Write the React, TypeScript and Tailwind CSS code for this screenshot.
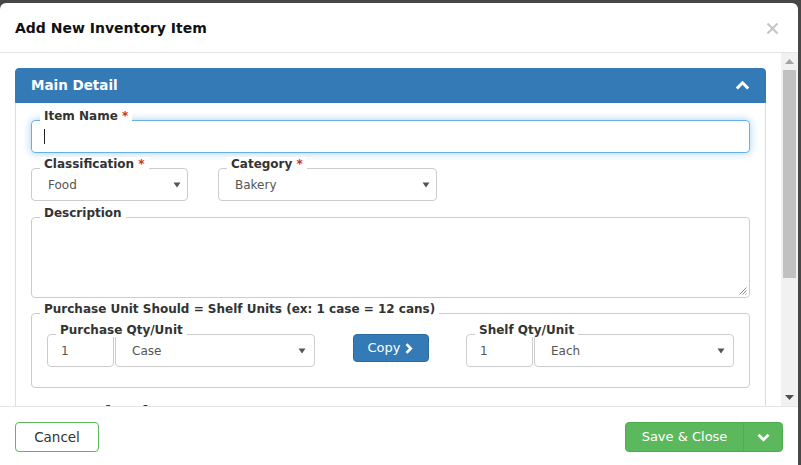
import React from "react";

const font = "font-['DejaVu_Sans','Verdana',sans-serif]";

function SelectArrow() {
  return (
    <svg width="8" height="6" viewBox="0 0 8 6" className="shrink-0">
      <path d="M0.5 0.5h7L4 5.5z" fill="#555" />
    </svg>
  );
}

function Field({
  label,
  required,
  className = "",
  children,
}: {
  label: string;
  required?: boolean;
  className?: string;
  children: React.ReactNode;
}) {
  return (
    <div className={`relative ${className}`}>
      {children}
      <span className="absolute left-[9px] top-[-11px] bg-white px-[4px] text-[12px] leading-[14px] font-bold text-[#333] whitespace-nowrap">
        {label}
        {required && <span className="text-[#c9302c]"> *</span>}
      </span>
    </div>
  );
}

function SelectBox({ value, className = "" }: { value: string; className?: string }) {
  return (
    <div
      className={`h-[33px] border border-[#ccc] rounded-[4px] bg-white flex items-center justify-between pl-[16px] pr-[6px] text-[12px] text-[#555] ${className}`}
    >
      <span className="mt-[1px]">{value}</span>
      <SelectArrow />
    </div>
  );
}

function QtyUnit({ label, qty, unit }: { label: string; qty: string; unit: string }) {
  return (
    <Field label={label}>
      <div className="flex gap-[1px]">
        <div className="w-[67px] h-[33px] border border-[#ccc] rounded-[4px] flex items-center pl-[13px] text-[12px] text-[#555]">
          <span className="mt-[1px]">{qty}</span>
        </div>
        <SelectBox value={unit} className="w-[200px] pr-[8px]" />
      </div>
    </Field>
  );
}

export default function App() {
  return (
    <div className={`h-[465px] w-[801px] overflow-hidden bg-[#474747] pt-[3px] ${font}`}>
      <div className="w-[798px] bg-white rounded-t-[6px] overflow-hidden">
        {/* header */}
        <div className="h-[50px] px-[15px] flex items-center justify-between border-b border-[#e5e5e5]">
          <h4 className="text-[14px] leading-[19px] font-bold text-[#111] mt-[1px]">Add New Inventory Item</h4>
          <svg width="13" height="13" viewBox="0 0 13 13" className="mr-[4px] mt-[1px]">
            <path d="M1.5 1.5l10 10M11.5 1.5l-10 10" stroke="#c6c6c6" strokeWidth="2.2" />
          </svg>
        </div>

        {/* scrolling body */}
        <div className="flex h-[353px]">
          <div className="flex-1 overflow-hidden p-[15px]">
            <div className="border border-[#ddd] rounded-[4px]">
              <div className="h-[35px] -mx-[1px] -mt-[1px] bg-[#337ab7] border border-[#337ab7] rounded-t-[4px] flex items-center justify-between pl-[15px] pr-[15px]">
                <span className="text-[13.5px] font-bold text-white">Main Detail</span>
                <svg width="15" height="9" viewBox="0 0 15 9">
                  <path d="M1.8 7.5L7.5 1.8l5.7 5.7" stroke="#fff" strokeWidth="3" fill="none" />
                </svg>
              </div>

              <div className="px-[15px] pt-[17px] pb-[20px] flex flex-col">
                <Field label="Item Name" required>
                  <div className="h-[33px] border border-[#66afe9] rounded-[4px] shadow-[0_0_8px_rgba(102,175,233,0.6)] flex items-center pl-[12px]">
                    <span className="w-[1px] h-[15px] bg-[#222]" />
                  </div>
                </Field>

                <div className="flex gap-[30px] mt-[15px]">
                  <Field label="Classification" required className="w-[157px]">
                    <SelectBox value="Food" className="pr-[5px]" />
                  </Field>
                  <Field label="Category" required className="w-[219px]">
                    <SelectBox value="Bakery" className="pr-[5px]" />
                  </Field>
                </div>

                <Field label="Description" className="mt-[16px]">
                  <div className="relative h-[81px] border border-[#ccc] rounded-[4px]">
                    <svg width="9" height="9" viewBox="0 0 9 9" className="absolute right-[2px] bottom-[2px]">
                      <path d="M8.5 1.5L1.5 8.5M8.5 4.5L4.5 8.5M8.5 7.5L7.5 8.5" stroke="#888" strokeWidth="1" />
                    </svg>
                  </div>
                </Field>

                <Field label="Purchase Unit Should = Shelf Units (ex: 1 case = 12 cans)" className="mt-[15px]">
                  <div className="h-[75px] border border-[#ccc] rounded-[4px] pt-[20px] px-[15px] flex items-start">
                    <QtyUnit label="Purchase Qty/Unit" qty="1" unit="Case" />
                    <div className="flex-1 flex justify-center">
                      <button className="w-[76px] h-[28px] bg-[#337ab7] border border-[#2e6da4] rounded-[4px] text-white text-[13px] flex items-center justify-center gap-[5px]">
                        <span>Copy</span>
                        <svg width="8" height="11" viewBox="0 0 8 11">
                          <path d="M1.5 1.2l4.3 4.3-4.3 4.3" stroke="#fff" strokeWidth="2.6" fill="none" />
                        </svg>
                      </button>
                    </div>
                    <QtyUnit label="Shelf Qty/Unit" qty="1" unit="Each" />
                  </div>
                </Field>

                <Field label="Cost Per [Case]" className="mt-[27px]">
                  <div className="h-[33px] border border-[#ccc] rounded-[4px]" />
                </Field>
              </div>
            </div>
          </div>

          {/* scrollbar */}
          <div className="w-[17px] bg-[#f1f1f1] flex flex-col items-center">
            <div className="h-[17px] flex items-center justify-center">
              <svg width="9" height="5" viewBox="0 0 9 5">
                <path d="M0 5L4.5 0L9 5z" fill="#a3a3a3" />
              </svg>
            </div>
            <div className="w-[13px] h-[208px] bg-[#c1c1c1]" />
            <div className="flex-1" />
            <div className="h-[17px] flex items-center justify-center">
              <svg width="9" height="5" viewBox="0 0 9 5">
                <path d="M0 0L4.5 5L9 0z" fill="#505050" />
              </svg>
            </div>
          </div>
        </div>

        {/* footer */}
        <div className="border-t border-[#e5e5e5] px-[15px] pt-[15px] pb-[15px] flex items-center justify-between">
          <button className="w-[84px] h-[30px] border border-[#5cb85c] rounded-[4px] bg-white text-[13.5px] text-[#333]">
            Cancel
          </button>
          <div className="flex h-[30px] rounded-[4px] overflow-hidden bg-[#5cb85c] border border-[#4cae4c]">
            <button className="w-[117px] text-[13px] text-white">Save &amp; Close</button>
            <button className="w-[39px] border-l border-[#4cae4c] flex items-center justify-center">
              <svg width="13" height="9" viewBox="0 0 13 9">
                <path d="M1.5 1.8l5 5 5-5" stroke="#fff" strokeWidth="2.8" fill="none" />
              </svg>
            </button>
          </div>
        </div>
      </div>
    </div>
  );
}
